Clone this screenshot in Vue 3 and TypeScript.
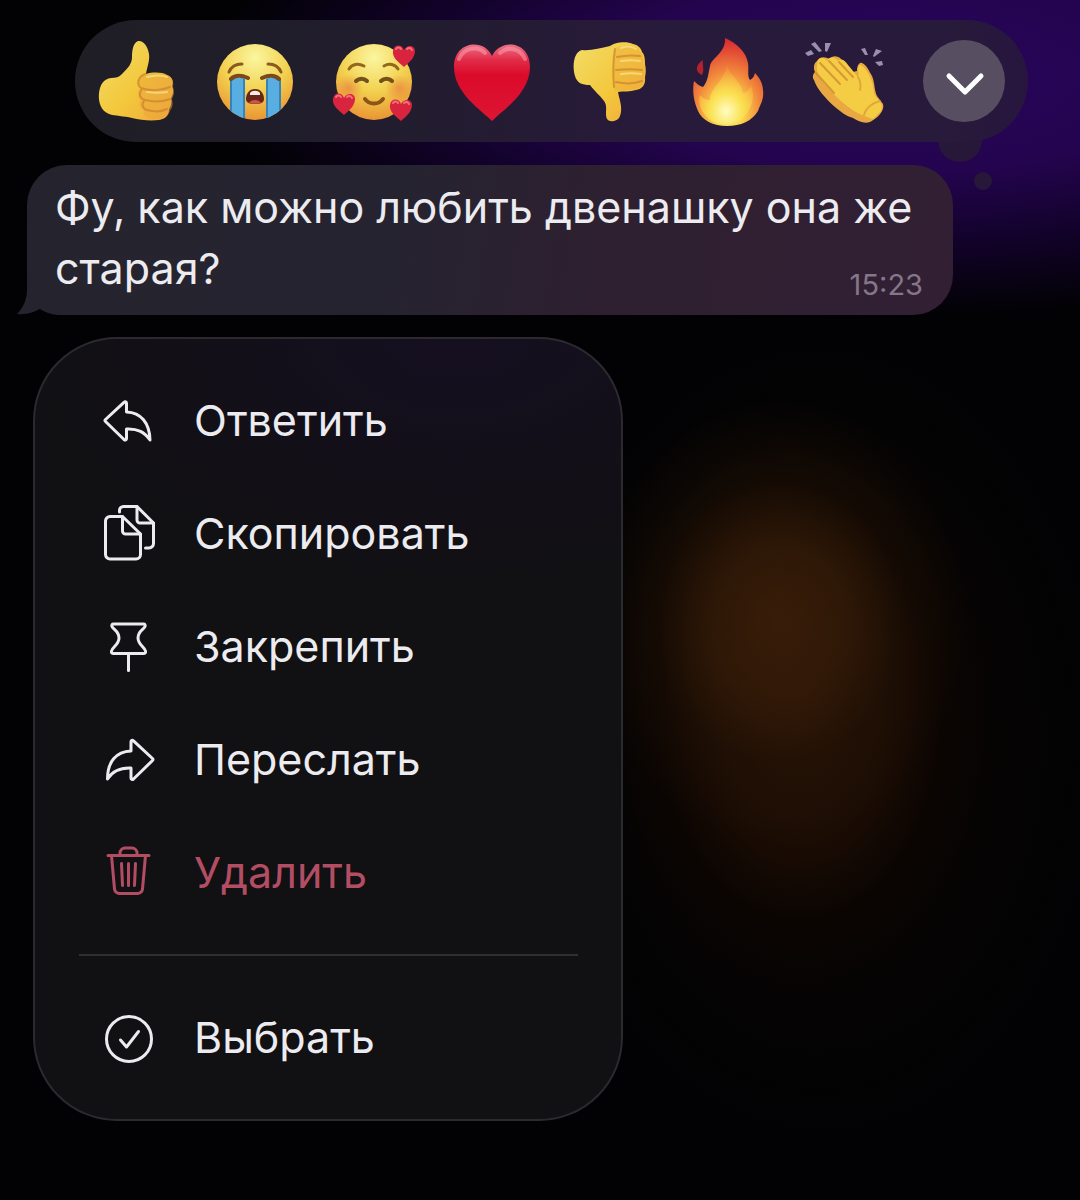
<script setup lang="ts">
import { ref } from 'vue'

interface MenuAction {
  id: string
  label: string
  paths: string[]
  danger?: boolean
}

const reactions = [
  { id: 'like', label: 'Нравится' },
  { id: 'cry', label: 'Рыдаю' },
  { id: 'adore', label: 'Обожаю' },
  { id: 'heart', label: 'Сердце' },
  { id: 'dislike', label: 'Не нравится' },
  { id: 'fire', label: 'Огонь' },
  { id: 'clap', label: 'Аплодисменты' },
]

const actions: MenuAction[] = [
  {
    id: 'reply',
    label: 'Ответить',
    paths: ['M4.500 25.500 23 8.300c1.200-1 2.500-.5 2.500 1V18C40 18.500 48.500 29 49 46 43.500 38 37 34.500 25.500 35v9.500c0 1.500-1.300 2-2.500 1L4.500 27.500c-.7-.7-.7-1.300 0-2Z'],
  },
  {
    id: 'copy',
    label: 'Скопировать',
    paths: [
      'M9 9.500h12.500L39.500 27v20.500a4.500 4.500 0 0 1-4.500 4.500H9a4.500 4.500 0 0 1-4.500-4.500V14A4.500 4.500 0 0 1 9 9.500Z',
      'M21.500 9.500V24a3 3 0 0 0 3 3h15',
      'M18.500 5V3.500a4 4 0 0 1 4-4H36L52.500 16v20.500a4.500 4.500 0 0 1-4.500 4.500h-3.500',
      'M36-.500V13a3 3 0 0 0 3 3h13.500',
    ],
  },
  {
    id: 'pin',
    label: 'Закрепить',
    paths: [
      'M12.500 4h30c1.500 0 2 1 1.500 2.500-1 3-7 4.500-7 11.500 0 6.500 6.500 9 7.500 13 .3 1.600-.2 2.500-1.500 2.500H12c-1.300 0-1.800-.9-1.500-2.500 1-4 7.500-6.500 7.500-13 0-7-6-8.500-7-11.500C10.500 5 11 4 12.500 4Z',
      'M27.500 33.500V50.500',
    ],
  },
  {
    id: 'forward',
    label: 'Переслать',
    paths: ['M51.500 25.500 32.500 7.800c-1.200-1-2.500-.5-2.500 1V18C15 18.500 6.500 29 6.500 46 11.500 38 18.500 34.500 30 35v10c0 1.500 1.300 2 2.500 1l19-18.500c.7-.7.7-1.300 0-2Z'],
  },
  {
    id: 'delete',
    label: 'Удалить',
    danger: true,
    paths: [
      'M7 9.500h41M19 9.500V7a5 5 0 0 1 5-5h7a5 5 0 0 1 5 5v2.500',
      'M10.500 9.500l3 33.500a5 5 0 0 0 5 4.500h18a5 5 0 0 0 5-4.500l3-33.500',
      'M20.500 17.500l1 22M27.500 17.500v22M34.500 17.500l-1 22',
    ],
  },
]

const selectAction: MenuAction = {
  id: 'select',
  label: 'Выбрать',
  paths: ['M28 5.500a22.500 22.500 0 1 0 0 45 22.500 22.500 0 1 0 0-45Z', 'M19.500 29l6 7L37.500 20.500'],
}

const picked = ref<string | null>(null)
</script>

<template>
  <main class="screen">
    <div class="reactions" role="toolbar" aria-label="Реакции">
      <button
        v-for="r in reactions"
        :key="r.id"
        type="button"
        class="reaction"
        :aria-label="r.label"
        :aria-pressed="picked === r.id"
        @click="picked = r.id"
      >
        <svg v-if="r.id === 'like'" class="emoji" viewBox="0 0 100 100" aria-hidden="true">
          <defs>
            <linearGradient id="hand" x1="0" y1="0" x2="1" y2="1">
              <stop offset="0" stop-color="#f3dc69" />
              <stop offset=".55" stop-color="#f3c83c" />
              <stop offset="1" stop-color="#f0a83c" />
            </linearGradient>
          </defs>
          <path fill="url(#hand)" d="M51 10c5-1 10 5 11 13 1 7-2 13-3 20 7-2 16-2 21 1 5 2 7 6 5 11 2 5 1 9-1 12 1 5 0 8-2 11 0 7-4 10-10 11-9 1-19 0-27-2-8-2-17-2-23-4-8-3-11-12-10-21 1-9 5-14 12-15 5 0 8-1 11-4 6-6 10-10 10-17 0-6 1-14 6-16Z" />
          <path fill="#eaa43c" opacity=".5" d="M57 44c-6 4-7 10-4 14-3 4-3 8 1 11-3 4-1 8 3 10-2 5 2 9 10 9 9 0 14-2 16-8 3-4 3-8 2-12 2-4 3-8 1-12 1-6-1-10-6-12-7-2-16-2-23 0Z" />
          <path fill="none" stroke="#c9822c" stroke-width="2" stroke-linecap="round" opacity=".7" d="M58 43c-7 3-9 10-4 14 8 3 20 3 29-1M55 58c-4 5-2 10 3 11 8 2 17 2 25-1M57 70c-3 4-1 8 3 9 7 2 14 2 20-1" />
          <path fill="none" stroke="#fae690" stroke-width="2" stroke-linecap="round" opacity=".7" d="M60 46c7-2 14-2 20 0M60 61c7 1 14 1 20 0" />
        </svg>

        <svg v-else-if="r.id === 'cry'" class="emoji" viewBox="0 0 100 100" aria-hidden="true">
          <defs>
            <radialGradient id="face" cx=".5" cy=".18" r=".88">
              <stop offset="0" stop-color="#fbf6a0" />
              <stop offset=".5" stop-color="#f2d14f" />
              <stop offset="1" stop-color="#e98b2f" />
            </radialGradient>
            <clipPath id="face-clip"><circle cx="50" cy="51" r="38" /></clipPath>
          </defs>
          <circle cx="50" cy="51" r="38" fill="url(#face)" />
          <g clip-path="url(#face-clip)">
            <path fill="#58aee0" d="M26 47h13v44H26zM62 47h13v44H62z" />
            <path fill="none" stroke="#3584b8" stroke-width="2" d="M26 48v40M39 48v42M62 48v42M75 48v40" />
          </g>
          <path fill="none" stroke="#7a4a1c" stroke-width="4" stroke-linecap="round" d="M26 48c4-4 10-4 17-1M57 47c7-3 13-3 17 1" />
          <path fill="none" stroke="#8b5a1f" stroke-width="3" stroke-linecap="round" d="M24 41c2-5 7-8 13-8M63 33c6 0 11 3 13 8" />
          <path fill="#6b2415" d="M50 58c6 0 9 5 9 10 0 4-4 5-9 5s-9-1-9-5c0-5 3-10 9-10Z" />
          <path fill="#f7ece4" d="M45 62c2-3 8-3 10 0v2H45Z" />
          <path fill="#c8564a" d="M44 72c2-4 10-4 12 0-3 1-9 1-12 0Z" />
        </svg>

        <svg v-else-if="r.id === 'adore'" class="emoji" viewBox="0 0 100 100" aria-hidden="true">
          <defs>
            <radialGradient id="blush">
              <stop offset="0" stop-color="#e5673a" stop-opacity=".5" />
              <stop offset="1" stop-color="#e5673a" stop-opacity="0" />
            </radialGradient>
            <path id="small-heart" d="M0 11C-6 6-12 1-11-5c1-7 9-7 11-1 3-6 11-5 11 1C11 1 6 6 0 11Z" />
          </defs>
          <circle cx="51" cy="51" r="38" fill="url(#face)" />
          <circle cx="26" cy="57" r="14" fill="url(#blush)" />
          <circle cx="76" cy="57" r="14" fill="url(#blush)" />
          <path fill="none" stroke="#93671d" stroke-width="3" stroke-linecap="round" d="M26 38c3-5 9-6 15-3M61 35c5-3 11-2 14 3" />
          <path fill="none" stroke="#74501b" stroke-width="4" stroke-linecap="round" d="M33 50c3-3 8-3 11 0M58 50c3-3 8-3 11 0" />
          <path fill="none" stroke="#8b5419" stroke-width="4" stroke-linecap="round" d="M42 68c4 6 14 6 18 0" />
          <g fill="#d9243f">
            <use href="#small-heart" x="81" y="25" />
            <use href="#small-heart" x="21" y="73" />
            <use href="#small-heart" x="78" y="79" />
          </g>
          <path fill="none" stroke="#f3848b" stroke-width="2" stroke-linecap="round" opacity=".8" d="M73 18c1-2 4-2 5 0M84 18c2-2 4-1 5 1M13 66c1-2 4-2 5 0M24 66c2-2 4-1 5 1M70 72c1-2 4-2 5 0M81 72c2-2 4-1 5 1" />
        </svg>

        <svg v-else-if="r.id === 'heart'" class="emoji" viewBox="0 0 100 100" aria-hidden="true">
          <defs>
            <linearGradient id="heart-red" x1="0" y1="0" x2="0" y2="1">
              <stop offset="0" stop-color="#ee7086" />
              <stop offset=".2" stop-color="#e22c48" />
              <stop offset=".4" stop-color="#db0a2a" />
              <stop offset="1" stop-color="#dd1533" />
            </linearGradient>
          </defs>
          <path fill="url(#heart-red)" d="M51 90C40 79 13 62 13 36c0-26 30-29 38-11 9-18 38-15 38 11 0 26-27 43-38 54Z" />
          <path fill="none" stroke="#f7a6b4" stroke-width="4" stroke-linecap="round" opacity=".5" d="M18 28c5-12 19-13 26-6M59 22c8-7 20-5 25 6" />
        </svg>

        <svg v-else-if="r.id === 'dislike'" class="emoji" viewBox="0 0 100 100" aria-hidden="true">
          <path fill="url(#hand)" d="M22 19c9 1 18-2 28-4 5-4 17-5 23-2 5 1 8 4 9 8 3 3 3 8 3 12 1 5 1 9 0 13 1 8-3 12-9 13-6 2-13 1-18 2 1 6 4 13 3 20-1 6-3 8-7 9-6 1-8-2-8-7 0-5 1-9-2-13-4-6-9-9-14-16-8 0-13-2-15-9-3-11-1-24 7-26Z" />
          <path fill="#eaa43c" opacity=".4" d="M56 17c-3 14-3 29-1 43 7-1 14-1 20-2 7-2 11-6 9-13 2-5 1-9-1-13 1-5 0-9-3-11-3-8-14-8-24-4Z" />
          <path fill="none" stroke="#c9822c" stroke-width="2" stroke-linecap="round" opacity=".7" d="M55 18c-2 12-2 26-1 38M57 26c9-2 16-2 23-1M56 39c10-1 18-1 26 0M56 51c9 2 18 2 26-1" />
          <path fill="none" stroke="#fae690" stroke-width="2" stroke-linecap="round" opacity=".7" d="M61 17c5-2 11-2 15 1M61 30c7-1 13-1 19 0M61 43c7-1 14-1 20 0" />
        </svg>

        <svg v-else-if="r.id === 'fire'" class="emoji" viewBox="0 0 100 100" aria-hidden="true">
          <defs>
            <radialGradient id="flame" cx=".5" cy=".84" r=".82">
              <stop offset="0" stop-color="#fff6a8" />
              <stop offset=".25" stop-color="#fbd84d" />
              <stop offset=".55" stop-color="#f28a3c" />
              <stop offset="1" stop-color="#da2a32" />
            </radialGradient>
            <radialGradient id="flame-core" cx=".5" cy=".78" r=".75">
              <stop offset="0" stop-color="#fffcc4" />
              <stop offset=".4" stop-color="#fbe253" />
              <stop offset="1" stop-color="#f6b13c" stop-opacity=".2" />
            </radialGradient>
          </defs>
          <path fill="url(#flame)" d="M47 7c11 5 21 13 23 25 1 7-1 13 2 17 2-1 4-3 5-7 7 7 9 15 8 24-1 6-4 10-5 14-6 10-17 15-31 15s-25-6-29-15c-4-9-6-20-4-30 3 3 5 5 9 6 5-6 5-12 7-21 2-9 16-13 15-28Z" />
          <path fill="#b3232e" d="M25 29c-1 6 2 9-1 15-7-3-7-10 1-15Z" />
          <path fill="url(#flame-core)" d="M49 34c2 10 14 16 16 28 3 0 6-3 8-7 5 12 0 24-9 33-9 7-24 7-33 0-9-8-11-16-9-24 4 4 6 5 10 5 0-12 14-18 17-35Z" />
        </svg>

        <svg v-else class="emoji" viewBox="0 0 100 100" aria-hidden="true">
          <path fill="#eaa843" d="M21 30c3-5 9-4 12-2 4-4 8-3 11-1l13 14 4-1c0-5 2-9 5-8 5 2 7 8 10 13 3 7 2 14 5 20l6 8c2 6-5 14-13 18-6 2-12-1-17-4-7-2-12-6-18-11-9-8-18-18-21-27-2-3-1-6 1-8-2-4-1-9 2-11Z" />
          <path fill="#f5cd45" d="M23 28c3-2 6-1 8 2 2-5 8-4 11 0 4-4 8 1 10 4l10 12c2-3-2-9 2-12 5 1 9 9 12 17 2 7 1 11 4 15 5 5 7 9 5 14l-8 8c-6-2-12-4-19-8-9-6-17-13-25-22-6-7-12-13-12-20 0-4 0-8 2-10Z" />
          <path fill="none" stroke="#ce8c2f" stroke-width="2" stroke-linecap="round" opacity=".8" d="M24 32l20 21M33 30l18 19M43 31l14 15M20 42l18 20" />
          <path fill="none" stroke="#d79a32" stroke-width="2" stroke-linecap="round" opacity=".7" d="M62 46c3 5 3 9 2 13M68 84c2-7 8-12 16-14" />
          <path fill="#9a8fae" d="M9 22l6-3 3 4-6 2ZM15 13l4-2 7 9-3 1ZM29 12l6 0-4 9-2-1ZM65 18l4-1 3 7-3 0ZM80 18l6 2-8 6-1-1ZM79 31l7-1 1 4-4 1Z" />
        </svg>
      </button>

      <button type="button" class="reaction" aria-label="Ещё реакции">
        <span class="more">
          <svg viewBox="0 0 82 82" aria-hidden="true"><path d="M26 36l16 16 16-16" /></svg>
        </span>
      </button>
    </div>

    <article class="message">
      <svg class="tail" viewBox="0 0 40 44" aria-hidden="true">
        <path d="M10 0v18C10 29 6 37 0 43c10 1 18-2 26-7l14 8V0Z" />
      </svg>
      <p class="text">Фу, как можно любить двенашку она же</p>
      <div class="last-line">
        <p class="text">старая?</p>
        <time class="time" datetime="15:23">15:23</time>
      </div>
    </article>

    <nav class="menu" aria-label="Действия с сообщением">
      <button
        v-for="a in actions"
        :key="a.id"
        type="button"
        class="item"
        :class="{ danger: a.danger }"
      >
        <svg class="icon" viewBox="0 0 56 56" aria-hidden="true">
          <path v-for="p in a.paths" :key="p" :d="p" />
        </svg>
        <span class="label">{{ a.label }}</span>
      </button>
      <hr class="divider" />
      <button type="button" class="item">
        <svg class="icon" viewBox="0 0 56 56" aria-hidden="true">
          <path v-for="p in selectAction.paths" :key="p" :d="p" />
        </svg>
        <span class="label">{{ selectAction.label }}</span>
      </button>
    </nav>
  </main>
</template>

<style>
body {
  background: #020204;
}
</style>

<style scoped>
.screen {
  isolation: isolate;
  box-sizing: border-box;
  min-height: 100vh;
  padding: 20px 24px 79px 27px;
  display: flex;
  flex-direction: column;
  align-items: flex-start;
  font-family: Inter, 'Liberation Sans', sans-serif;
  color: #ececf0;
  background:
    radial-gradient(ellipse 190px 220px at 72% 620px, rgba(60, 31, 9, .85) 0%, rgba(54, 28, 8, .72) 35%, rgba(34, 18, 5, .4) 65%, transparent 100%),
    radial-gradient(ellipse 190px 280px at 74% 710px, #281206 0%, #1c0d04 45%, #0b0502 75%, transparent 100%),
    radial-gradient(ellipse 300px 420px at 76% 740px, #0b0602 0%, transparent 100%),
    radial-gradient(ellipse 690px 240px at 83% 75px, #28055c 0%, #24044f 40%, #12022a 70%, transparent 100%),
    #020204;
}

button {
  border: 0;
  padding: 0;
  margin: 0;
  background: none;
  color: inherit;
  font: inherit;
  cursor: pointer;
}

.reactions {
  position: relative;
  align-self: stretch;
  box-sizing: border-box;
  height: 122px;
  margin: 0 28px 0 48px;
  padding: 0 5px 0 3px;
  display: grid;
  grid-template-columns: repeat(8, 1fr);
  align-items: center;
  border-radius: 61px;
  background: linear-gradient(90deg, #1f1e25 0%, #211d2d 30%, #281a3a 60%, #281a3a 92%, #27153f 100%);
}

.reactions::before,
.reactions::after {
  content: '';
  position: absolute;
  border-radius: 50%;
  background: #27183a;
}

.reactions::before {
  z-index: -1;
  right: 46px;
  bottom: -20px;
  width: 44px;
  height: 44px;
}

.reactions::after {
  right: 36px;
  bottom: -48px;
  width: 18px;
  height: 18px;
}

.reaction {
  height: 100px;
  display: flex;
  align-items: center;
  justify-content: center;
}

.emoji {
  width: 100px;
  height: 100px;
  flex: none;
}

.more {
  width: 82px;
  height: 82px;
  border-radius: 50%;
  background: #574f61;
}

.more svg {
  display: block;
  width: 100%;
  fill: none;
  stroke: #fff;
  stroke-width: 5;
  stroke-linecap: round;
  stroke-linejoin: round;
}

.message {
  position: relative;
  box-sizing: border-box;
  width: 100%;
  max-width: 926px;
  margin-top: 23px;
  padding: 12px 30px 14px 28px;
  border-radius: 40px 40px 40px 32px;
  background: linear-gradient(100deg, #25242e 0%, #262330 40%, #2e2030 62%, #321f34 100%);
}

.tail {
  position: absolute;
  left: -10px;
  bottom: 0;
  width: 40px;
  height: 44px;
  fill: #25242e;
}

.text {
  margin: 0;
  font-size: 43px;
  line-height: 61px;
}

.last-line {
  position: relative;
  display: flex;
  align-items: flex-start;
  justify-content: space-between;
}

.time {
  margin-top: 31px;
  font-size: 29px;
  line-height: 32px;
  color: #857688;
}

.menu {
  box-sizing: border-box;
  width: 100%;
  max-width: 590px;
  margin: 22px 0 0 6px;
  padding: 26px 43px 24px 44px;
  display: flex;
  flex-direction: column;
  border: 2px solid #2b2a2f;
  border-radius: 84px;
  background: radial-gradient(ellipse 420px 240px at 72% 0, #150f20 0%, #111013 100%);
}

.item {
  height: 113px;
  padding-left: 22px;
  display: flex;
  align-items: center;
  gap: 37px;
  font-size: 43px;
  line-height: 56px;
  text-align: left;
}

.label {
  padding-bottom: 4px;
}

.icon {
  width: 56px;
  height: 56px;
  flex: none;
  overflow: visible;
  fill: none;
  stroke: currentColor;
  stroke-width: 3;
  stroke-linecap: round;
  stroke-linejoin: round;
}

.danger {
  color: #b34d63;
}

.divider {
  width: 100%;
  height: 2px;
  margin: 24px 0 26px;
  border: 0;
  background: #303033;
}
</style>
